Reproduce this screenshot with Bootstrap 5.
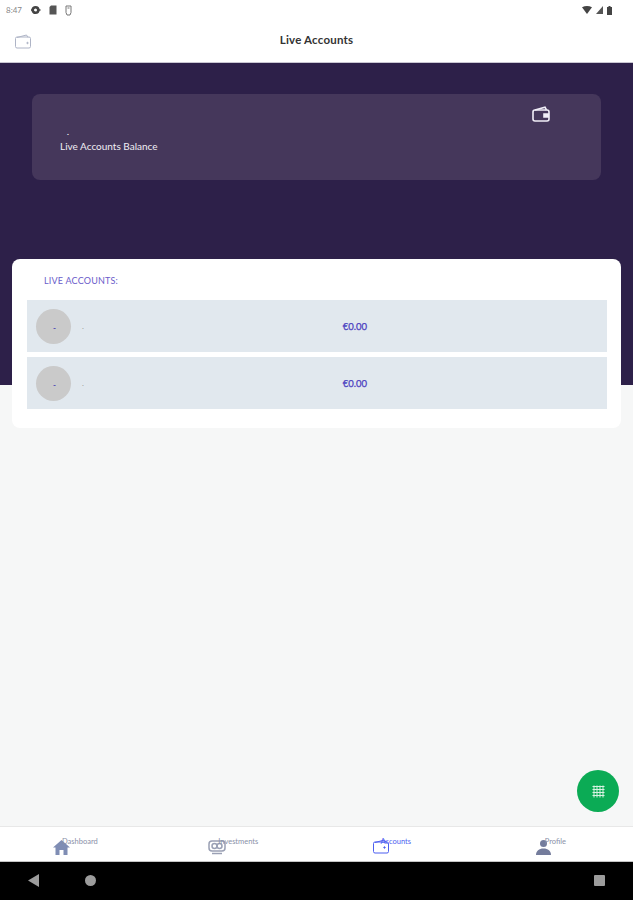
<!doctype html>
<html lang="en">
<head>
<meta charset="utf-8">
<title>Live Accounts</title>
<link href="https://cdn.jsdelivr.net/npm/bootstrap@5.3.0/dist/css/bootstrap.min.css" rel="stylesheet">
<style>
html,body{height:100%;overflow:hidden}
body{font-family:"Lato","Noto Sans",sans-serif;background:#f6f7f7}
.page-shell{height:900px;position:relative}
.status-strip{height:20px;padding:0 21px 0 6px;background:#fff;color:#888;font-size:8px}
.status-strip svg{display:block}
.top-head{height:43px;background:#fff;border-bottom:1px solid #c9c6d2;padding-left:15px}
.top-title{left:0;right:0;top:0;bottom:0;padding-bottom:2px;font-size:11.5px;font-weight:700;color:#333;letter-spacing:.2px}
.hero{height:322px;background:#2d2049;padding:31px 32px 0}
.bal-card{height:86px;background:#45375b;border-radius:8px;padding:0 28px;color:#fff;position:relative}
.bal-dot{font-size:8px;line-height:8px;padding-top:34px;padding-left:7px;font-weight:700}
.bal-label{font-size:10px;line-height:12px;margin-top:4px;color:#f0eef4}
.bal-icon{position:absolute;left:500px;top:12px}
.acc-card{margin:-126px 12px 0;height:169px;background:#fff;border-radius:8px;padding:0 14px 0 15px;position:relative}
.acc-head{height:41px;padding:16px 0 0 17px;font-size:9px;line-height:12px;color:#6a5cca;letter-spacing:.2px}
.acc-row{height:52px;background:#e1e8ee;margin-bottom:5px;padding-left:9px;position:relative}
.acc-avatar{width:35px;height:35px;border-radius:50%;background:#cacaca;color:#4b3fb5;font-size:8px;font-weight:700;padding:4px 0 0 2px}
.acc-name{margin-left:11px;font-size:8px;color:#999}
.acc-amt{left:0;right:0;top:0;bottom:0;padding-top:3px;font-size:9.5px;color:#4a3dc0;position:absolute;-webkit-text-stroke:.25px #4a3dc0}
.acc-amt span{margin-left:76px}
.fill-space{flex:1 1 auto}
.fab-grid{position:absolute;left:577px;top:770px;width:42px;height:42px;border-radius:50%;background:#0bab55}
.bottom-tabs{height:36px;background:#fff;border-top:1px solid #e8e8e8;border-bottom:1px solid #c4c4c4}
.tab-slot{position:relative;width:25%}
.tab-icon{position:absolute;top:12px}
.tab-text{position:absolute;top:10px;font-size:7.5px;line-height:10px;color:#8a90a8}
.tab-on{color:#4d5ff0}
.sys-bar{height:38px;background:#000;position:relative}
.sys-bar svg{position:absolute}
</style>
</head>
<body>
<div class="page-shell d-flex flex-column">
  <div class="status-strip d-flex align-items-center flex-shrink-0">
    <span>8:47</span>
    <svg class="ms-2" width="11" height="10" viewBox="0 0 11 10"><circle cx="5.500" cy="5" r="2.800" fill="none" stroke="#444" stroke-width="2.600"/><path d="M1 5h2M8 5h2.500" stroke="#444" stroke-width="1.400"/></svg>
    <svg class="ms-2" width="8" height="10" viewBox="0 0 8 10"><path d="M2 .5h5.500v9H.5V2z" fill="#555"/></svg>
    <svg class="ms-2" width="7" height="11" viewBox="0 0 7 11"><path d="M1 1h5v6.500L5 10H2L1 7.500z" fill="none" stroke="#777" stroke-width="1"/><path d="M2.500 3h2" stroke="#777"/></svg>
    <div class="ms-auto d-flex align-items-center gap-1">
      <svg width="10" height="8" viewBox="0 0 10 8"><path d="M0 1.200Q5-1.200 10 1.200L5 8z" fill="#444"/></svg>
      <svg width="7" height="8" viewBox="0 0 7 8"><path d="M7 0v8H0z" fill="#555"/></svg>
      <svg width="5" height="9" viewBox="0 0 5 9"><path d="M1.500 0h2v1H5v8H0V1h1.500z" fill="#444"/></svg>
    </div>
  </div>
  <div class="top-head d-flex align-items-center flex-shrink-0 position-relative">
    <svg width="16" height="15" viewBox="0 0 16 15" fill="none" stroke="#aeb4c6" stroke-width="1"><path d="M2 3.500 11.500 1l1.500 2.500"/><rect x=".5" y="3" width="15" height="11" rx="1.500"/><circle cx="12.500" cy="9" r=".7" fill="#aeb4c6"/></svg>
    <div class="top-title position-absolute d-flex align-items-center justify-content-center">Live Accounts</div>
  </div>
  <div class="hero flex-shrink-0">
    <div class="bal-card">
      <div class="bal-dot">.</div>
      <div class="bal-label">Live Accounts Balance</div>
      <svg class="bal-icon" width="18" height="16" viewBox="0 0 18 16" fill="none" stroke="#f1eef8" stroke-width="1.600"><path d="M3 4 13 1.200 14.500 4"/><rect x="1" y="4" width="16" height="11" rx="2"/><path d="M17 8h-5v3h5" fill="#f1eef8"/></svg>
    </div>
  </div>
  <div class="acc-card flex-shrink-0">
    <div class="acc-head">LIVE ACCOUNTS:</div>
    <div class="acc-row d-flex align-items-center">
      <div class="acc-avatar d-flex align-items-center justify-content-center">-</div>
      <div class="acc-name">.</div>
      <div class="acc-amt d-flex align-items-center justify-content-center"><span>€0.00</span></div>
    </div>
    <div class="acc-row d-flex align-items-center">
      <div class="acc-avatar d-flex align-items-center justify-content-center">-</div>
      <div class="acc-name">.</div>
      <div class="acc-amt d-flex align-items-center justify-content-center"><span>€0.00</span></div>
    </div>
  </div>
  <div class="fill-space"></div>
  <div class="bottom-tabs d-flex flex-shrink-0">
    <div class="tab-slot">
      <svg class="tab-icon" style="left:53px" width="17" height="17" viewBox="0 0 17 17" fill="#7f8db4"><path d="M8.500 1 0 8.500h2.500V16h4v-5h4v5h4V8.500H17z"/></svg>
      <span class="tab-text" style="left:62px">Dashboard</span>
    </div>
    <div class="tab-slot">
      <svg class="tab-icon" style="left:50px;top:13px" width="18" height="15" viewBox="0 0 18 15" fill="none" stroke="#9aa0b4" stroke-width="1.500"><rect x="1" y="1" width="16" height="10" rx="3"/><circle cx="6.500" cy="6" r="2.500"/><circle cx="11.500" cy="6" r="2.500"/><path d="M4 13.500h10"/></svg>
      <span class="tab-text" style="left:60px">Investments</span>
    </div>
    <div class="tab-slot">
      <svg class="tab-icon" style="left:56px;top:12px" width="16" height="15" viewBox="0 0 16 15" fill="none" stroke="#4d5ff0" stroke-width="1"><path d="M2 3.500 11.500 1l1.500 2.500"/><rect x=".5" y="3" width="15" height="11" rx="1.500"/><circle cx="11.500" cy="8.500" r=".7" fill="#4d5ff0"/></svg>
      <span class="tab-text tab-on" style="left:64px">Accounts</span>
    </div>
    <div class="tab-slot">
      <svg class="tab-icon" style="left:61px;top:12px" width="15" height="17" viewBox="0 0 15 17" fill="#747c9c"><circle cx="7.500" cy="4.500" r="3.500"/><path d="M0 16c0-4 3-6.500 7.500-6.500S15 12 15 16z"/></svg>
      <span class="tab-text" style="left:70px">Profile</span>
    </div>
  </div>
  <div class="sys-bar flex-shrink-0">
    <svg style="left:28px;top:12px" width="12" height="13" viewBox="0 0 12 13"><path d="M11 0v13L0 6.500z" fill="#9c9c9c"/></svg>
    <svg style="left:85px;top:13px" width="11" height="11" viewBox="0 0 11 11"><circle cx="5.500" cy="5.500" r="5.500" fill="#9c9c9c"/></svg>
    <svg style="left:594px;top:13px" width="11" height="11" viewBox="0 0 11 11"><rect width="11" height="11" rx="1" fill="#9c9c9c"/></svg>
  </div>
  <div class="fab-grid d-flex align-items-center justify-content-center">
    <svg width="13" height="13" viewBox="0 0 13 13" fill="none" stroke="#d8f2e2" stroke-width="1"><path d="M.5 1.500h12M.5 4.500h12M.5 7.500h12M.5 10.500h12M2 .5v12M5 .5v12M8 .5v12M11 .5v12"/></svg>
  </div>
</div>
<script src="https://cdn.jsdelivr.net/npm/bootstrap@5.3.0/dist/js/bootstrap.bundle.min.js"></script>
</body>
</html>
